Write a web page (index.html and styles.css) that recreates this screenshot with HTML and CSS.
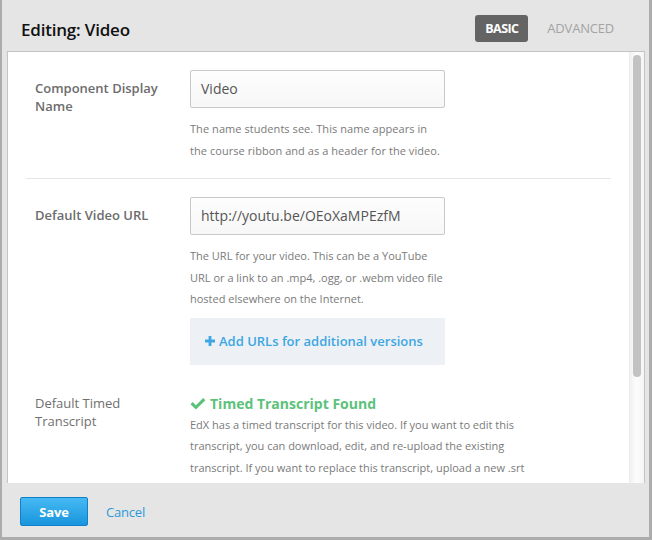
FILE: index.html
```html
<!DOCTYPE html>
<html>
<head>
<meta charset="utf-8">
<link rel="stylesheet" href="styles.css">
</head>
<body>
<div class="modal">
  <header class="modal-header">
    <h1 class="title">Editing: Video</h1>
    <nav class="modes">
      <span class="mode active">BASIC</span>
      <span class="mode">ADVANCED</span>
    </nav>
  </header>
  <div class="panel">
    <div class="content">
      <div class="row bordered">
        <div class="label">Component Display Name</div>
        <div class="field">
          <div class="input">Video</div>
          <p class="help loose">The name students see. This name appears in the course ribbon and as a header for the video.</p>
        </div>
      </div>
      <div class="row">
        <div class="label">Default Video URL</div>
        <div class="field">
          <div class="input">http://youtu.be/OEoXaMPEzfM</div>
          <p class="help">The URL for your video. This can be a YouTube URL or a link to an .mp4, .ogg, or .webm video file hosted elsewhere on the Internet.</p>
          <div class="add-urls">
            <svg class="plus" width="10" height="10" viewBox="0 0 10 10"><path d="M3.6 0h2.8v3.6H10v2.8H6.4V10H3.6V6.4H0V3.6h3.6z" fill="#3ca7e2"/></svg>
            <span>Add URLs for additional versions</span>
          </div>
        </div>
      </div>
      <div class="row last">
        <div class="label">Default Timed Transcript</div>
        <div class="field wide">
          <div class="found">
            <svg class="check" width="16" height="12" viewBox="0 0 16 12"><path d="M0.5 6.3L2.7 4.1L5.9 7.2L13.2 0L15.4 2.2L5.9 11.6Z" fill="#5bc27a"/></svg>
            <span>Timed Transcript Found</span>
          </div>
          <p class="help">EdX has a timed transcript for this video. If you want to edit this transcript, you can download, edit, and re-upload the existing transcript. If you want to replace this transcript, upload a new .srt transcript file.</p>
        </div>
      </div>
    </div>
    <div class="scrollbar"><div class="thumb"></div></div>
  </div>
  <footer class="modal-footer">
    <button class="save">Save</button>
    <a class="cancel">Cancel</a>
  </footer>
</div>
</body>
</html>
```

FILE: styles.css
```css
html, body {
  margin: 0;
  padding: 0;
}
body {
  font-family: "Open Sans", "Noto Sans", sans-serif;
  background: #e5e5e5;
}
.modal {
  box-sizing: border-box;
  width: 652px;
  height: 540px;
  background: #e5e5e5;
  border-left: 2px solid #acacac;
  border-right: 3px solid #acacac;
  border-bottom: 3px solid #acacac;
  padding: 0 4px 0 5px;
  display: flex;
  flex-direction: column;
}
.modal-header {
  height: 51px;
  flex: none;
  display: flex;
  align-items: flex-start;
  justify-content: space-between;
  padding: 0 31px 0 14px;
}
.title {
  margin: 18px 0 0;
  font-size: 17px;
  font-weight: 600;
  color: #111;
  letter-spacing: -0.2px;
}
.modes {
  margin-top: 15px;
  display: flex;
  align-items: center;
  gap: 19px;
}
.mode {
  font-size: 13px;
  font-weight: 400;
  color: #a3a3a3;
  letter-spacing: -0.2px;
  line-height: 27px;
  height: 27px;
}
.mode.active {
  background: #646464;
  color: #fff;
  border-radius: 3px;
  padding: 0 10px;
  font-size: 12.5px;
  font-weight: 700;
  letter-spacing: -0.6px;
}
.panel {
  flex: 1;
  min-height: 0;
  display: flex;
  background: #fff;
  border: 1px solid #c4c4c4;
  border-bottom: none;
}
.content {
  flex: 1;
  overflow: hidden;
  padding: 0 18px;
}
.scrollbar {
  width: 15px;
  flex: none;
  box-sizing: border-box;
  background: linear-gradient(to right, #f1f1f1, #fcfcfc 45%, #f5f5f5);
  border-left: 1px solid #ececec;
  padding: 3px 3px 0 3px;
}
.thumb {
  height: 322px;
  background: #c2c2c2;
  border-radius: 5px;
}
.row {
  display: flex;
  padding: 18px 0 0 9px;
}
.row.bordered {
  border-bottom: 1px solid #e6e6e6;
  padding-bottom: 17px;
}
.row.last {
  padding-top: 29px;
  padding-bottom: 30px;
}
.label {
  width: 130px;
  margin-right: 25px;
  padding-top: 9px;
  font-size: 13px;
  line-height: 18px;
  font-weight: 600;
  color: #6c6c6c;
}
.last .label {
  font-weight: 400;
  color: #707070;
  padding-top: 0;
}
.field {
  width: 255px;
}
.field.wide {
  width: 345px;
}
.input {
  box-sizing: border-box;
  height: 38px;
  border: 1px solid #c9c9c9;
  border-radius: 2px;
  background: linear-gradient(#fdfdfd, #f7f7f7);
  padding: 0 10px;
  font-size: 14px;
  line-height: 36px;
  color: #555;
}
.help {
  margin: 10px 0 0;
  font-size: 11px;
  line-height: 21.5px;
  color: #7a7a7a;
}
.help.loose {
  letter-spacing: 0.06px;
}
.add-urls {
  margin-top: 8px;
  height: 47px;
  background: #edf1f5;
  display: flex;
  align-items: center;
  gap: 4px;
  padding-left: 15px;
  font-size: 13px;
  font-weight: 600;
  color: #3ca7e2;
}
.found {
  display: flex;
  align-items: center;
  gap: 4px;
  font-size: 14px;
  font-weight: 700;
  color: #5bc27a;
  line-height: 20px;
}
.found + .help {
  margin-top: 0;
}
.modal-footer {
  height: 54px;
  flex: none;
  box-sizing: border-box;
  display: flex;
  align-items: center;
  padding: 3px 0 0 13px;
  gap: 18px;
}
.save {
  box-sizing: border-box;
  width: 68px;
  height: 29px;
  border: 1px solid #1180c8;
  border-radius: 2px;
  background: linear-gradient(#45b9f3, #1995dd);
  color: #fff;
  font-family: inherit;
  font-size: 13px;
  font-weight: 700;
  letter-spacing: -0.2px;
  padding: 0;
}
.cancel {
  font-size: 13px;
  color: #2b9ad9;
  letter-spacing: -0.2px;
}
```
